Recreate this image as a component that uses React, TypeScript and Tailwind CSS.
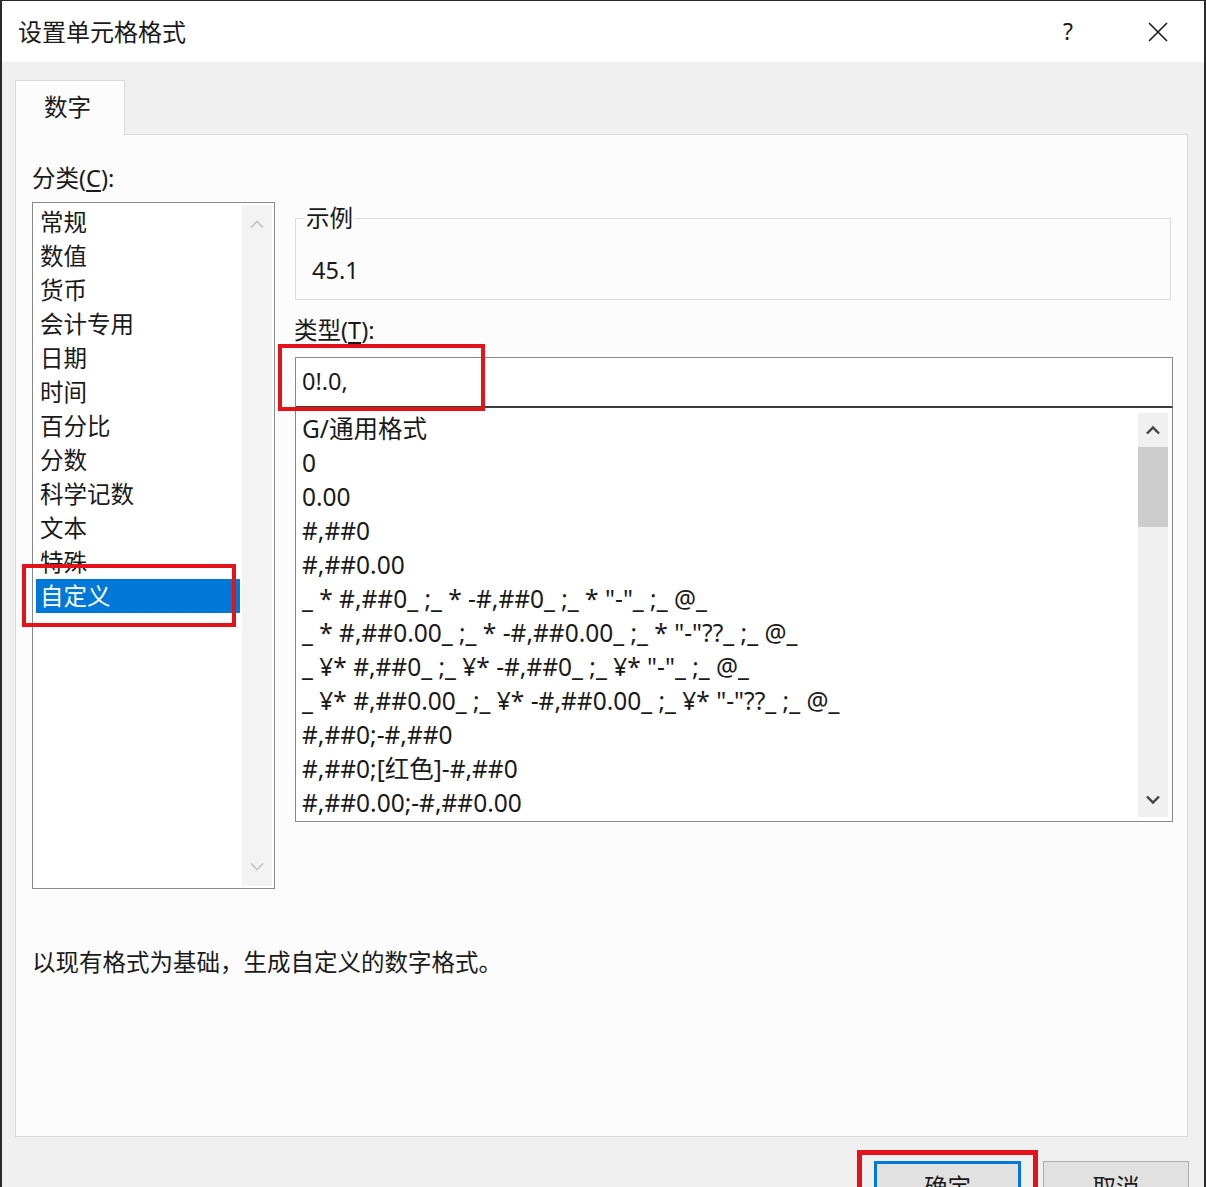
import React from 'react'

const categories = ['常规', '数值', '货币', '会计专用', '日期', '时间', '百分比', '分数', '科学记数', '文本', '特殊', '自定义']

const formats = [
  'G/通用格式',
  '0',
  '0.00',
  '#,##0',
  '#,##0.00',
  '_ * #,##0_ ;_ * -#,##0_ ;_ * "-"_ ;_ @_',
  '_ * #,##0.00_ ;_ * -#,##0.00_ ;_ * "-"??_ ;_ @_',
  '_ ¥* #,##0_ ;_ ¥* -#,##0_ ;_ ¥* "-"_ ;_ @_',
  '_ ¥* #,##0.00_ ;_ ¥* -#,##0.00_ ;_ ¥* "-"??_ ;_ @_',
  '#,##0;-#,##0',
  '#,##0;[红色]-#,##0',
  '#,##0.00;-#,##0.00',
]

function Chevron({ up, color, width = 2.4 }: { up?: boolean; color: string; width?: number }) {
  return (
    <svg width="16" height="10" viewBox="0 0 16 10" fill="none">
      <path
        d={up ? 'M2 8.5 L8 2.5 L14 8.5' : 'M2 1.5 L8 7.5 L14 1.5'}
        stroke={color}
        strokeWidth={width}
        strokeLinejoin="miter"
      />
    </svg>
  )
}

export default function App() {
  return (
    <div className="w-[1206px] h-[1187px] overflow-hidden flex flex-col bg-[#f0f0f0] border-t border-x-2 border-t-[#2a2a2a] border-x-[#2a2a2a] text-[#1a1a1a] font-['Microsoft_YaHei','Noto_Sans','Noto_Sans_CJK_SC',sans-serif]">
      {/* ── Title bar ───────────────────────────── */}
      <div className="h-[61px] shrink-0 bg-white flex items-center pl-[16px] pr-[36px]">
        <span className="text-[24px] leading-none">设置单元格格式</span>
        <span className="ml-auto w-[20px] text-center text-[23px] leading-none">?</span>
        <svg className="ml-[70px]" width="20" height="20" viewBox="0 0 20 20" fill="none">
          <path d="M1 1 L19 19 M19 1 L1 19" stroke="#1a1a1a" strokeWidth="1.6" />
        </svg>
      </div>

      {/* ── Body ───────────────────────────────── */}
      <div className="flex-1 flex flex-col pl-[13px] pt-[18px]">
        {/* Tab */}
        <div className="relative z-10 -mb-px w-[110px] h-[55px] bg-[#fcfcfc] border border-b-0 border-[#d9d9d9] flex items-center pl-[28px] text-[23.5px]">
          数字
        </div>

        {/* Panel */}
        <div className="w-[1173px] h-[1003px] shrink-0 bg-[#fcfcfc] border border-[#d9d9d9] flex flex-col pl-[16px]">
          <div className="flex items-start">
            {/* Left column */}
            <div className="w-[243px] pt-[27px] flex flex-col">
              <div className="text-[23.5px] leading-[32px]">
                分类(<span className="underline underline-offset-[3px]">C</span>):
              </div>
              <div className="mt-[8px] h-[687px] border border-[#8a8a8a] bg-white flex">
                <div className="flex-1 ml-[3px] mr-[2px] pt-[2px] flex flex-col">
                  {categories.map((c) =>
                    c === '自定义' ? (
                      <div key={c} className="relative h-[34px] leading-[34px] pl-[4px] bg-[#0078d7] text-white text-[23.5px]">
                        {c}
                        <div className="absolute left-[-14px] top-[-15px] w-[214px] h-[63px] border-4 border-[#e3121b]" />
                      </div>
                    ) : (
                      <div key={c} className="h-[34px] leading-[34px] pl-[4px] text-[23.5px]">
                        {c}
                      </div>
                    ),
                  )}
                </div>
                <div className="w-[30px] mr-[2px] my-[2px] bg-[#f3f3f3] flex flex-col justify-between items-center py-[14px]">
                  <Chevron up color="#c4c4c4" width={1.6} />
                  <Chevron color="#c4c4c4" width={1.6} />
                </div>
              </div>
            </div>

            {/* Right column */}
            <div className="ml-[20px] w-[878px] pt-[83px] flex flex-col">
              {/* Sample group */}
              <div className="relative w-[876px] h-[82px] border border-[#dcdcdc] pl-[16px] pt-[35px]">
                <span className="absolute left-[9px] top-[-17px] bg-[#fcfcfc] px-[1px] text-[23.5px] leading-[32px]">示例</span>
                <div className="text-[23.5px] leading-[32px]">45.1</div>
              </div>

              <div className="mt-[14px] text-[23.5px] leading-[32px] -ml-[1px]">
                类型(<span className="underline underline-offset-[3px]">T</span>):
              </div>

              {/* Type input */}
              <div className="relative mt-[11px] h-[51px] bg-white border border-[#8a8a8a] border-b-2 border-b-[#3c3c3c] flex items-center pl-[6px] text-[23.5px]">
                0!.0,
                <div className="absolute left-[-18px] top-[-14px] w-[207px] h-[67px] border-4 border-[#e3121b]" />
              </div>

              {/* Format list */}
              <div className="h-[414px] bg-white border border-t-0 border-[#8a8a8a] flex">
                <div className="flex-1 pl-[6px] pt-[4px] flex flex-col">
                  {formats.map((f) => (
                    <div key={f} className="h-[34px] leading-[34px] text-[24.5px] whitespace-pre">
                      {f}
                    </div>
                  ))}
                </div>
                <div className="w-[30px] mr-[4px] mt-[5px] mb-[4px] bg-[#f0f0f0] flex flex-col">
                  <div className="h-[34px] flex items-center justify-center">
                    <Chevron up color="#404040" />
                  </div>
                  <div className="h-[80px] bg-[#cdcdcd]" />
                  <div className="mt-auto h-[34px] flex items-center justify-center">
                    <Chevron color="#404040" />
                  </div>
                </div>
              </div>
            </div>
          </div>

          <div className="mt-[57px] text-[23.5px] leading-[32px]">以现有格式为基础，生成自定义的数字格式。</div>
        </div>

        {/* Buttons */}
        <div className="mt-[24px] flex justify-end gap-[22px] pr-[15px]">
          <div className="relative w-[147px] h-[54px] bg-[#e1e1e1] border-[3px] border-[#0078d7] flex items-center justify-center text-[23.5px]">
            确定
            <div className="absolute left-[-20px] top-[-14px] w-[181px] h-[80px] border-[5px] border-[#e3121b]" />
          </div>
          <div className="w-[146px] h-[54px] bg-[#e1e1e1] border border-[#adadad] flex items-center justify-center text-[23.5px]">
            取消
          </div>
        </div>
      </div>
    </div>
  )
}
